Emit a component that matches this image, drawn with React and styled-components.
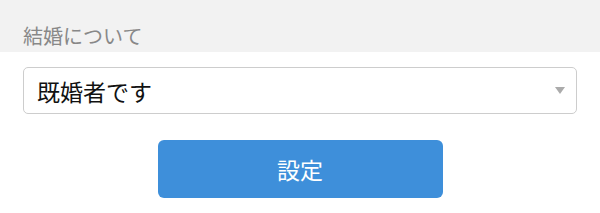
import React from 'react'
import styled, { createGlobalStyle } from 'styled-components'

const GlobalStyle = createGlobalStyle`
  body {
    margin: 0;
    background: #fff;
    font-family: "Noto Sans CJK JP", "Noto Sans", sans-serif;
  }
`

const Page = styled.div`
  width: 600px;
`

const Header = styled.div`
  background: #f2f2f2;
  height: 52px;
  box-sizing: border-box;
  padding: 23px 23px 0;
`

const Label = styled.div`
  font-size: 20px;
  line-height: 26px;
  color: #888;
`

const Form = styled.div`
  padding: 15px 23px 0 23px;
  display: flex;
  flex-direction: column;
  align-items: center;
`

const SelectBox = styled.div`
  width: 100%;
  height: 47px;
  box-sizing: border-box;
  border: 1px solid #cdcdcd;
  border-radius: 5px;
  display: flex;
  align-items: center;
  justify-content: space-between;
  padding: 0 11px 0 13px;
  cursor: pointer;
`

const SelectText = styled.span`
  font-size: 23px;
  line-height: 28px;
  color: #111;
`

const Arrow = styled.span`
  width: 0;
  height: 0;
  border-left: 5px solid transparent;
  border-right: 5px solid transparent;
  border-top: 7px solid #ababab;
`

const Button = styled.button`
  margin-top: 26px;
  width: 285px;
  height: 58px;
  border: none;
  border-radius: 6px;
  background: #3e8fda;
  color: #fff;
  font-family: inherit;
  font-size: 23px;
  line-height: 28px;
  cursor: pointer;
`

const App = () => {
  return (
    <Page>
      <GlobalStyle />
      <Header>
        <Label>結婚について</Label>
      </Header>
      <Form>
        <SelectBox>
          <SelectText>既婚者です</SelectText>
          <Arrow />
        </SelectBox>
        <Button>設定</Button>
      </Form>
    </Page>
  )
}

export default App
